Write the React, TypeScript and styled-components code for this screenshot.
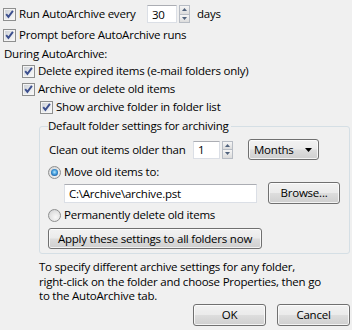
import React from "react";
import styled, { createGlobalStyle } from "styled-components";

const Global = createGlobalStyle`
  html, body { margin: 0; padding: 0; background: #f0f0f0; }
  body {
    font-family: "Open Sans", "Noto Sans", sans-serif;
    font-size: 11.5px;
    letter-spacing: -0.22px;
    color: #000;
  }
  #root { width: 352px; height: 330px; overflow: hidden; }
`;

const Dialog = styled.div`
  width: 352px;
  height: 330px;
  box-sizing: border-box;
  padding-top: 5px;
  display: flex;
  flex-direction: column;
  background: #f0f0f0;
`;

const Row = styled.div<{ $indent?: number; $top?: number; $h?: number }>`
  display: flex;
  align-items: center;
  height: ${(p) => p.$h ?? 18}px;
  margin-top: ${(p) => p.$top ?? 0}px;
  padding-left: ${(p) => p.$indent ?? 0}px;
  white-space: nowrap;
`;

const Label = styled.span<{ $w?: number; $gap?: number }>`
  margin-left: ${(p) => p.$gap ?? 3}px;
  ${(p) => (p.$w ? `width: ${p.$w}px;` : "")}
  flex: none;
  line-height: 18px;
`;

const CheckBox = styled.span`
  width: 13px;
  height: 13px;
  box-sizing: border-box;
  border: 1px solid #8e8f8f;
  background: #f4f4f4;
  padding: 1px;
  display: inline-flex;
  flex: none;
`;

const CheckInner = styled.span`
  flex: 1;
  background: linear-gradient(135deg, #cdd1d7 0%, #e7e9ec 55%, #f7f7f7 100%);
  display: flex;
`;

const CheckSvg = styled.svg`
  width: 9px;
  height: 9px;
  display: block;
`;

const Radio = styled.span`
  width: 13px;
  height: 13px;
  box-sizing: border-box;
  border-radius: 50%;
  border: 1px solid #8e8f8f;
  background: radial-gradient(circle at 60% 65%, #f8f8f8 0%, #e3e3e3 55%, #c9ccd0 100%);
  display: inline-flex;
  align-items: center;
  justify-content: center;
  flex: none;
`;

const RadioDot = styled.span`
  width: 7px;
  height: 7px;
  border-radius: 50%;
  background: radial-gradient(circle at 50% 45%, #bfe8fb 0%, #4aa3df 40%, #1a5fa6 75%, #16457a 100%);
`;

const TextBox = styled.div<{ $w: number; $h?: number }>`
  width: ${(p) => p.$w}px;
  height: ${(p) => p.$h ?? 18}px;
  box-sizing: border-box;
  background: #fff;
  border: 1px solid #dbdfe6;
  border-top-color: #abadb3;
  padding-left: 4px;
  display: flex;
  align-items: center;
  flex: none;
`;

const Spin = styled.div`
  width: 11px;
  height: 18px;
  margin-left: 2px;
  display: flex;
  flex-direction: column;
  flex: none;
`;

const SpinBtn = styled.div`
  flex: 1;
  box-sizing: border-box;
  border: 1px solid #b7bcc4;
  background: linear-gradient(#f6f6f6, #dcdcdc);
  display: flex;
  align-items: center;
  justify-content: center;
  & + & { border-top: none; }
`;

const Arrow = styled.svg<{ $w?: number; $h?: number }>`
  width: ${(p) => p.$w ?? 5}px;
  height: ${(p) => p.$h ?? 3}px;
  display: block;
`;

const Button = styled.div<{ $w: number; $h?: number; $ml?: number }>`
  width: ${(p) => p.$w}px;
  height: ${(p) => p.$h ?? 21}px;
  margin-left: ${(p) => p.$ml ?? 0}px;
  box-sizing: border-box;
  border: 1px solid #707070;
  border-radius: 3px;
  background: linear-gradient(#f2f2f2 0%, #ebebeb 48%, #dddddd 52%, #cfcfcf 100%);
  box-shadow: inset 0 0 0 1px rgba(255, 255, 255, 0.75);
  display: flex;
  align-items: center;
  justify-content: center;
  flex: none;
  line-height: 1;
`;

const Select = styled(Button)`
  justify-content: space-between;
  padding: 0 6px 0 5px;
`;

const Group = styled.fieldset`
  margin: 1px 2px 0 39px;
  padding: 0 8px 4px 8px;
  border: 1px solid #d5dfe5;
  border-radius: 3px;
  min-width: 0;
`;

const Legend = styled.legend`
  padding: 0 2px 0 0;
  line-height: 18px;
  height: 18px;
`;

const Note = styled.p`
  margin: 6px 0 0 39px;
  line-height: 14.5px;
`;

const Footer = styled.div`
  display: flex;
  justify-content: flex-end;
  gap: 11px;
  padding-right: 2px;
`;

function Check({ on = true }: { on?: boolean }) {
  return (
    <CheckBox>
      <CheckInner>
        {on && (
          <CheckSvg viewBox="0 0 9 9">
            <path d="M1.2 4.2 L3.4 6.9 L7.9 0.9" fill="none" stroke="#3c4f8e" strokeWidth="1.9" />
          </CheckSvg>
        )}
      </CheckInner>
    </CheckBox>
  );
}

function Spinner() {
  return (
    <Spin>
      <SpinBtn>
        <Arrow viewBox="0 0 5 3">
          <path d="M0 3 L2.5 0 L5 3 Z" fill="#50627c" />
        </Arrow>
      </SpinBtn>
      <SpinBtn>
        <Arrow viewBox="0 0 5 3">
          <path d="M0 0 L2.5 3 L5 0 Z" fill="#50627c" />
        </Arrow>
      </SpinBtn>
    </Spin>
  );
}

export default function App() {
  return (
    <>
      <Global />
      <Dialog>
        <Row $indent={3}>
          <Check />
          <Label $w={128}>Run AutoArchive every</Label>
          <TextBox $w={30}>30</TextBox>
          <Spinner />
          <Label $gap={7}>days</Label>
        </Row>
        <Row $indent={3} $top={3}>
          <Check />
          <Label>Prompt before AutoArchive runs</Label>
        </Row>
        <Row $indent={4}>
          <span>During AutoArchive:</span>
        </Row>
        <Row $indent={22}>
          <Check />
          <Label>Delete expired items (e-mail folders only)</Label>
        </Row>
        <Row $indent={22}>
          <Check />
          <Label>Archive or delete old items</Label>
        </Row>
        <Row $indent={40}>
          <Check />
          <Label>Show archive folder in folder list</Label>
        </Row>
        <Group>
          <Legend>Default folder settings for archiving</Legend>
          <Row $top={4} $h={21} $indent={1}>
            <Label $gap={0} $w={144}>Clean out items older than</Label>
            <TextBox $w={27}>1</TextBox>
            <Spinner />
            <Select $w={71} $ml={15}>
              <span>Months</span>
              <Arrow viewBox="0 0 7 4" $w={7} $h={4}>
                <path d="M0 0 L7 0 L3.5 4 Z" fill="#000" />
              </Arrow>
            </Select>
          </Row>
          <Row $top={3}>
            <Radio>
              <RadioDot />
            </Radio>
            <Label>Move old items to:</Label>
          </Row>
          <Row $top={1} $h={22} $indent={16}>
            <TextBox $w={193} $h={19}>C:\Archive\archive.pst</TextBox>
            <Button $w={72} $h={22} $ml={11}>Browse...</Button>
          </Row>
          <Row $top={2}>
            <Radio />
            <Label>Permanently delete old items</Label>
          </Row>
          <Row $top={4} $h={21}>
            <Button $w={214}>Apply these settings to all folders now</Button>
          </Row>
        </Group>
        <Note>
          To specify different archive settings for any folder,
          <br />
          right-click on the folder and choose Properties, then go
          <br />
          to the AutoArchive tab.
        </Note>
        <Footer>
          <Button $w={73} $h={22}>OK</Button>
          <Button $w={73} $h={22}>Cancel</Button>
        </Footer>
      </Dialog>
    </>
  );
}
